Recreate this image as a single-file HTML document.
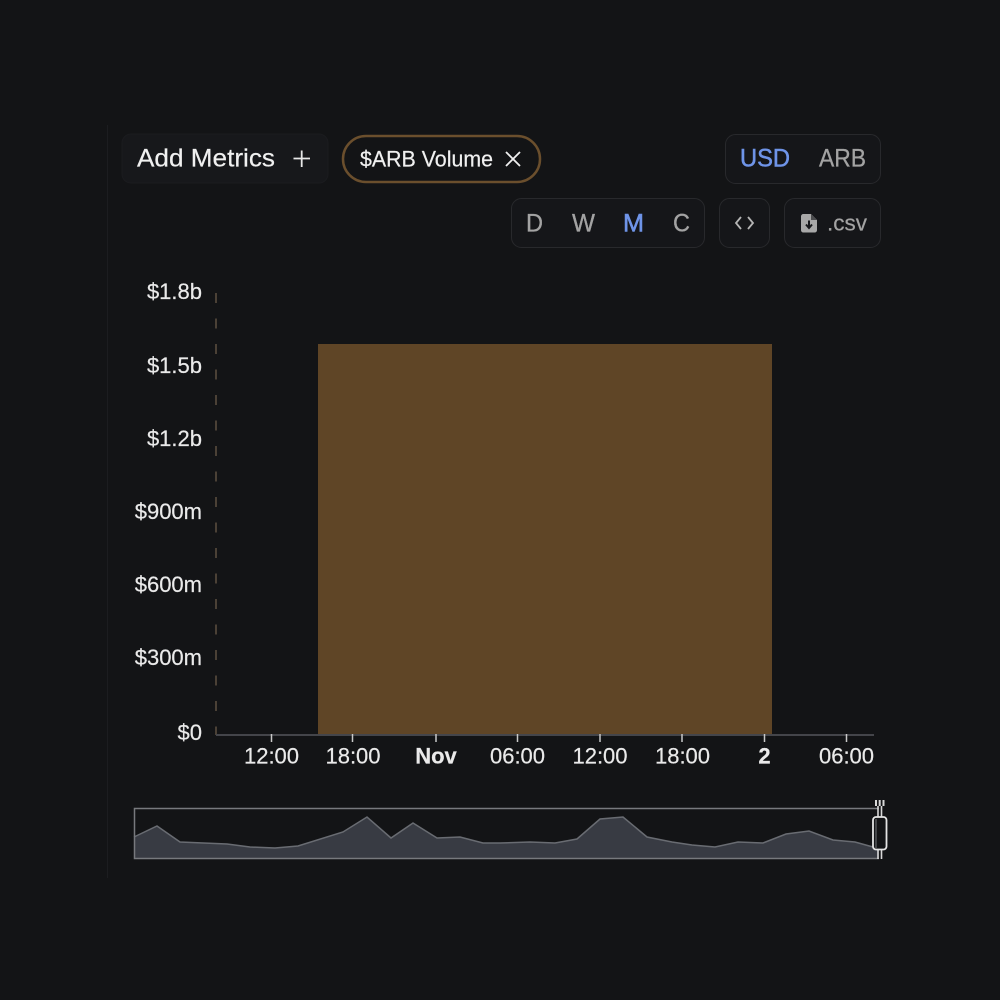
<!DOCTYPE html>
<html><head><meta charset="utf-8"><style>
html,body{margin:0;padding:0;background:#131416;width:1000px;height:1000px;overflow:hidden}
svg{display:block;font-family:"Liberation Sans",sans-serif}
</style></head><body>
<svg width="1000" height="1000" viewBox="0 0 1000 1000" xmlns="http://www.w3.org/2000/svg">
<rect width="1000" height="1000" fill="#131416"/>
<line x1="107.500" y1="125" x2="107.500" y2="878" stroke="#1c1d20"/>

<!-- top controls -->
<rect x="122" y="134" width="206" height="49" rx="9" fill="#17181b" stroke="#1b1c1f"/>
<text x="137" y="166.500" font-size="25" fill="#f0f0f0" stroke="#f0f0f0" stroke-width=".2" textLength="138" lengthAdjust="spacingAndGlyphs">Add Metrics</text>
<path d="M293.500 158.500H310M301.700 150.500V167" stroke="#e8e8e8" stroke-width="1.800" fill="none"/>

<rect x="343" y="136" width="197" height="46" rx="23" fill="#131416" stroke="#6b4f2d" stroke-width="2.500"/>
<text x="360" y="166.500" font-size="22" fill="#f0f0f0" stroke="#f0f0f0" stroke-width=".2" textLength="133" lengthAdjust="spacingAndGlyphs">$ARB Volume</text>
<path d="M506 152L520 166M520 152L506 166" stroke="#f0f0f0" stroke-width="1.800" fill="none"/>

<rect x="725.500" y="134.500" width="155" height="49" rx="10" fill="#151619" stroke="#28292c"/>
<text x="740" y="166.500" font-size="25" fill="#6f94e8" stroke="#6f94e8" stroke-width=".5" textLength="50" lengthAdjust="spacingAndGlyphs">USD</text>
<text x="819" y="166.500" font-size="25" fill="#a3a3a3" stroke="#a3a3a3" stroke-width=".3" textLength="47" lengthAdjust="spacingAndGlyphs">ARB</text>

<rect x="511.500" y="198.500" width="193" height="49" rx="10" fill="#151619" stroke="#28292c"/>
<text x="526" y="231.500" font-size="25" fill="#a3a3a3" stroke="#a3a3a3" stroke-width=".3" textLength="17" lengthAdjust="spacingAndGlyphs">D</text>
<text x="572" y="231.500" font-size="25" fill="#a3a3a3" stroke="#a3a3a3" stroke-width=".3" textLength="23" lengthAdjust="spacingAndGlyphs">W</text>
<text x="623" y="231.500" font-size="25" fill="#6f94e8" stroke="#6f94e8" stroke-width=".6" textLength="21" lengthAdjust="spacingAndGlyphs">M</text>
<text x="673" y="231.500" font-size="25" fill="#a3a3a3" stroke="#a3a3a3" stroke-width=".3" textLength="17" lengthAdjust="spacingAndGlyphs">C</text>

<rect x="719.500" y="198.500" width="50" height="49" rx="10" fill="#151619" stroke="#28292c"/>
<path d="M741 217L736 223L741 229M748 217L753 223L748 229" stroke="#b5b5b5" stroke-width="1.800" fill="none"/>

<rect x="784.500" y="198.500" width="96" height="49" rx="10" fill="#151619" stroke="#28292c"/>
<path d="M803.500 214H811L817 220V230C817 231.500 816 232.500 814.500 232.500H803.500C802 232.500 801 231.500 801 230V216.500C801 215 802 214 803.500 214Z" fill="#a8a8a8"/>
<path d="M811 214V220H817Z" fill="#4c4d4f"/>
<path d="M806 224.500L809 228L812 224.500M809 220.500V227" stroke="#17181b" stroke-width="2" fill="none"/>
<text x="827" y="230.500" font-size="22" fill="#a3a3a3" stroke="#a3a3a3" stroke-width=".2" textLength="40" lengthAdjust="spacingAndGlyphs">.csv</text>

<!-- chart -->
<line x1="216" y1="293" x2="216" y2="735" stroke="#5e5040" stroke-width="1.500" stroke-dasharray="10 15.500"/>
<rect x="318" y="344" width="454" height="391" fill="#5f4526"/>
<line x1="216" y1="735" x2="874" y2="735" stroke="#44454a" stroke-width="2"/>
<g stroke="#c8c8c8" stroke-width="1.500">
<line x1="271.500" y1="734" x2="271.500" y2="742"/>
<line x1="352.500" y1="734" x2="352.500" y2="742"/>
<line x1="436" y1="734" x2="436" y2="742"/>
<line x1="517.500" y1="734" x2="517.500" y2="742"/>
<line x1="600" y1="734" x2="600" y2="742"/>
<line x1="682" y1="734" x2="682" y2="742"/>
<line x1="764.500" y1="734" x2="764.500" y2="742"/>
<line x1="846.500" y1="734" x2="846.500" y2="742"/>
</g>
<g font-size="22" fill="#eaeaea" stroke="#eaeaea" stroke-width=".2" text-anchor="end">
<text x="202" y="299">$1.8b</text>
<text x="202" y="373">$1.5b</text>
<text x="202" y="446">$1.2b</text>
<text x="202" y="519">$900m</text>
<text x="202" y="592">$600m</text>
<text x="202" y="665">$300m</text>
<text x="202" y="740">$0</text>
</g>
<g font-size="22" fill="#eaeaea" stroke="#eaeaea" stroke-width=".2" text-anchor="middle">
<text x="271.500" y="763.500">12:00</text>
<text x="353" y="763.500">18:00</text>
<text x="436" y="763.500" font-weight="700">Nov</text>
<text x="517.500" y="763.500">06:00</text>
<text x="600" y="763.500">12:00</text>
<text x="682.500" y="763.500">18:00</text>
<text x="764.500" y="763.500" font-weight="700">2</text>
<text x="846.500" y="763.500">06:00</text>
</g>

<!-- navigator -->
<path d="M134 837L157 826L180 842L227 844L250 847L275 848L298 846L343 832L367 817L391 838L413 823L437 838L460 837L483 843L500 843L530 842L555 843L577 839L600 819L623 817L647 837L672 842L692 845L715 847L738 842L763 843L786 834L809 831L833 840L855 842L873 847L879 849V858.500H134Z" fill="#383b43"/>
<path d="M134 837L157 826L180 842L227 844L250 847L275 848L298 846L343 832L367 817L391 838L413 823L437 838L460 837L483 843L500 843L530 842L555 843L577 839L600 819L623 817L647 837L672 842L692 845L715 847L738 842L763 843L786 834L809 831L833 840L855 842L873 847" fill="none" stroke="#696c72" stroke-width="1.500"/>
<path d="M879 808.500H134.500V858.500H879" fill="none" stroke="#77797d" stroke-width="1.500"/>
<path d="M878 806V859M881.500 806V859" stroke="#d8d8d8" stroke-width="1.600" fill="none"/>
<rect x="873" y="817" width="13.500" height="32.500" rx="3" fill="#131416" stroke="#e4e4e4" stroke-width="1.800"/>
<line x1="876" y1="819" x2="876" y2="848" stroke="#55565a" stroke-width="1.500"/>
<path d="M876 800V806M879.700 800V806M883.500 800V806" stroke="#d8d8d8" stroke-width="2" fill="none"/>
</svg>
</body></html>
